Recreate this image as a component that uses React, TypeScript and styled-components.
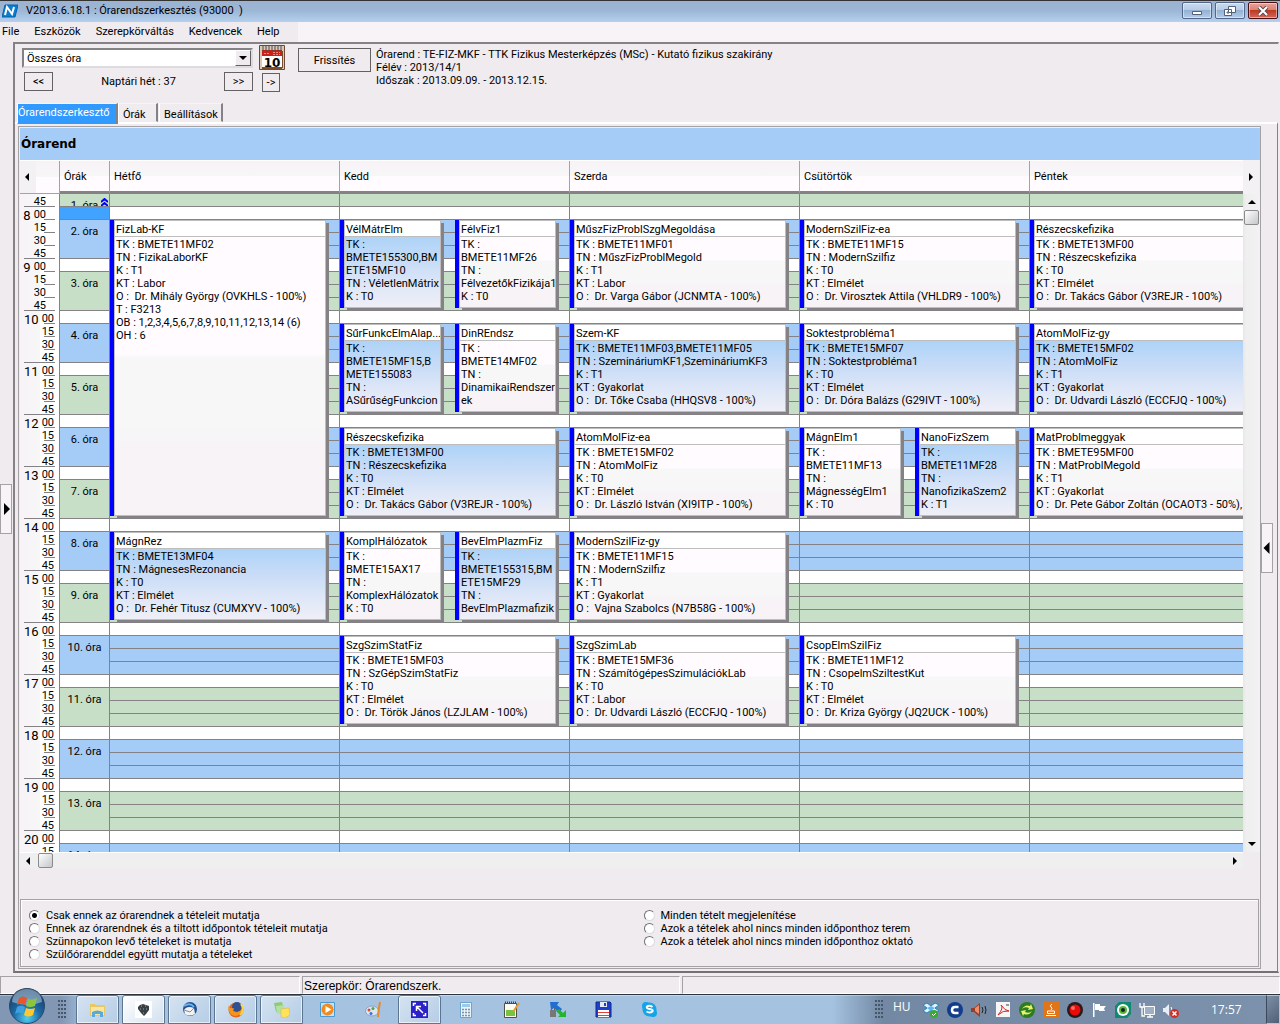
import React, { useState } from "react";
import styled, { createGlobalStyle, css } from "styled-components";

const face = "#efebef";
const pale = "#f7f3f7";
const line = "#848284";
const blue = "#a5cbf7";
const green = "#c6dfc6";

const GlobalStyle = createGlobalStyle`
  *, *::before, *::after { box-sizing: border-box; }
  body { margin: 0; background: ${face}; color: #000; font: 11px/13px Roboto, "Liberation Sans", Arial, sans-serif; }
  button, select, input { font: inherit; color: inherit; margin: 0; }
  button { padding: 0; border: 0; background: none; }
`;

const Window = styled.div`
  display: flex;
  flex-direction: column;
  height: 100vh;
  min-height: 600px;
  overflow: hidden;
`;

/* ---------- title bar and menu ---------- */

const TitleBar = styled.header`
  display: flex;
  align-items: center;
  gap: 3px;
  height: 22px;
  flex: none;
  padding: 0 2px 2px;
  border-top: 1px solid #333;
  background: linear-gradient(#9cb3d3, #9cb6d6 45%, #b5d0ef);
`;

const Title = styled.h1`
  flex: 1;
  margin: 0 0 0 5px;
  font-size: 11px;
  font-weight: 400;
  line-height: 16px;
  white-space: pre;
`;

const WindowButton = styled.button<{ $close?: boolean }>`
  display: grid;
  place-items: center;
  width: 30px;
  height: 17px;
  border: 1px solid ${(p) => (p.$close ? "#4a1018" : "#52658a")};
  border-radius: 2px;
  background: ${(p) =>
    p.$close
      ? "linear-gradient(#e8a297, #d98072 48%, #bd3a22 50%, #d0695a)"
      : "linear-gradient(#c9dbf0, #b5cbe6 48%, #94b1d3 50%, #b1cdea)"};
  box-shadow: inset 0 0 0 1px rgba(255, 255, 255, 0.45);
`;

const MenuBar = styled.nav`
  display: flex;
  height: 20px;
  flex: none;
  background: ${pale};
`;

const MenuItems = styled.div`
  display: flex;
  gap: 15px;
  width: 298px;
  padding-left: 2px;
  background: ${face};
`;

const MenuItem = styled.button`
  line-height: 16px;
`;

/* ---------- frame ---------- */

const Main = styled.main`
  display: flex;
  flex: 1;
  min-height: 0;
`;

const Strip = styled.div<{ $wide?: boolean }>`
  display: flex;
  align-items: center;
  flex: none;
  width: ${(p) => (p.$wide ? 16 : 13)}px;
`;

const Handle = styled.button`
  display: grid;
  place-items: center;
  width: 12px;
  height: 50px;
  border: 1px solid #a5a2a5;
  background: ${pale};
`;

const Frame = styled.section`
  display: flex;
  flex-direction: column;
  flex: 1;
  min-width: 0;
  margin: 0 1px 3px 0;
  border: 2px solid;
  border-color: ${line} ${face} #737173 ${line};
  border-right-width: 1px;
`;

/* ---------- toolbar ---------- */

const Toolbar = styled.div`
  display: flex;
  align-items: flex-start;
  height: 59px;
  flex: none;
  padding: 1px 7px 0;
`;

const WeekPicker = styled.div`
  display: flex;
  flex-direction: column;
  gap: 4px;
  width: 231px;
  padding-top: 3px;
`;

const SelectBox = styled.div`
  position: relative;
  height: 20px;
`;

const Select = styled.select`
  appearance: none;
  width: 100%;
  height: 20px;
  padding: 0 20px 0 3px;
  border: 2px solid;
  border-color: ${line} #dedbde #dedbde ${line};
  border-radius: 0;
  background: #fff;
`;

const SelectArrow = styled.span`
  position: absolute;
  top: 2px;
  right: 2px;
  display: grid;
  place-items: center;
  width: 16px;
  height: 16px;
  border: 1px solid;
  border-color: #fff #636163 #636163 #fff;
  background: ${face};
  pointer-events: none;
`;

const WeekRow = styled.div`
  display: flex;
  align-items: center;
  justify-content: space-between;
  padding: 0 0 0 2px;
`;

const FlatButton = styled.button<{ $w: number; $h: number }>`
  flex: none;
  width: ${(p) => p.$w}px;
  height: ${(p) => p.$h}px;
  border: 1px solid #636163;
  background: ${face};
`;

const IconColumn = styled.div`
  display: flex;
  flex-direction: column;
  align-items: flex-start;
  gap: 3px;
  margin: 0 13px 0 6px;
`;

const CalendarButton = styled.button`
  display: block;
  width: 26px;
  height: 25px;
`;

const NextButton = styled(FlatButton)`
  margin-left: 3px;
`;

const RefreshButton = styled(FlatButton)`
  margin-top: 3px;
`;

const Info = styled.p`
  margin: 3px 0 0 5px;
  white-space: pre-line;
`;

/* ---------- tabs ---------- */

const Tabs = styled.div`
  display: flex;
  height: 19px;
  flex: none;
  padding-left: 2px;
`;

const Tab = styled.button<{ $active: boolean; $w: number }>`
  width: ${(p) => p.$w}px;
  margin-right: 1px;
  padding: 3px 0 0 4px;
  text-align: left;
  white-space: nowrap;
  border: 1px solid;
  border-color: ${pale} ${line} transparent #fff;
  border-right-width: 2px;
  ${(p) =>
    p.$active &&
    css`
      height: 21px;
      padding: 0 0 3px;
      margin-right: 0;
      color: #fff;
      background: #319aff;
      z-index: 1;
    `}
`;

const Page = styled.div`
  display: flex;
  flex: 1;
  min-height: 0;
  border-top: 2px solid #fff;
  border-right: 1px solid ${line};
`;

const PageBody = styled.div`
  display: flex;
  flex-direction: column;
  flex: 1;
  min-width: 0;
  margin: 2px 0 2px 3px;
  padding: 1px 0 0 1px;
  border: 1px solid #a5a2a5;
`;

const Band = styled.h2`
  flex: none;
  height: 32px;
  margin: 0;
  font: bold 12px/32px "DejaVu Sans", "Liberation Sans", sans-serif;
  padding-left: 1px;
  background: ${blue};
`;

/* ---------- timetable ---------- */

const Timetable = styled.div`
  display: grid;
  grid-template-columns: minmax(0, 1fr) 17px;
  grid-template-rows: 34px minmax(0, 1fr) 16px;
  flex: 1;
  min-height: 0;
`;

const columns = css`
  display: grid;
  grid-template-columns: 40px 50px repeat(10, 115px);
  overflow: hidden;
`;

const HeadRow = styled.div`
  ${columns}
  border-top: 1px solid #fff;
`;

const HeadCell = styled.div<{ $span?: number }>`
  grid-column: span ${(p) => p.$span ?? 1};
  padding: 9px 4px 8px;
  border-right: 1px solid #a5a2a5;
  border-bottom: 3px solid ${line};
  background: linear-gradient(${pale}, #f7f7f7 50%, #fffbff 50%);
`;

const HeadCorner = styled(HeadCell)`
  display: flex;
  padding: 0;
  border-bottom: 1px solid #a5a2a5;
`;

const SideButton = styled.button`
  display: grid;
  place-items: center;
  width: 16px;
  background: #f3f1f3;
`;

const Body = styled.div`
  ${columns}
  grid-auto-rows: 13px;
  background: #fff;
`;

const TimeCell = styled.div<{ $row: number; $last: boolean; $narrow: boolean }>`
  grid-area: ${(p) => p.$row + 1} / 1;
  display: flex;
  justify-content: flex-end;
  padding-right: ${(p) => (p.$narrow ? 13 : 5)}px;
  border-right: 1px solid ${line};
  line-height: 15px;
  background:
    linear-gradient(${line}, ${line}) no-repeat ${(p) => (p.$last ? 4 : 24)}px 12px / ${(p) => (p.$last ? 31 : 11)}px 1px,
    linear-gradient(90deg, ${pale}, #f7f7f7 20px, transparent 20px);
`;

const Hour = styled.span`
  font-size: 13px;
  line-height: 17px;
  margin-right: 3px;
`;

const Lesson = styled.div<{ $row: number; $rows: number; $bg: string }>`
  grid-area: ${(p) => p.$row + 1} / 2 / span ${(p) => p.$rows};
  display: flex;
  justify-content: center;
  overflow: hidden;
  padding-top: 5px;
  border: solid ${line};
  border-width: 0 1px 1px 0;
  background: ${(p) => p.$bg};
`;

const Slot = styled.div<{ $row: number; $day: number; $bg: string }>`
  grid-area: ${(p) => p.$row + 1} / ${(p) => p.$day * 2 + 3} / auto / span 2;
  border: solid ${line};
  border-width: 0 1px 1px 0;
  background: ${(p) => p.$bg};
`;

const Card = styled.article<{ $row: number; $rows: number; $col: number; $cols: number }>`
  grid-area: ${(p) => p.$row + 1} / ${(p) => p.$col + 3} / span ${(p) => p.$rows} / span ${(p) => p.$cols};
  min-width: 0;
  margin: 0 14px 3px 0;
  border-left: 4px solid #0000ff;
  display: flex;
`;

const CardFace = styled.div<{ $tinted: boolean }>`
  display: flex;
  flex-direction: column;
  flex: 1;
  min-width: 0;
  overflow: hidden;
  border: 1px solid #bdbebd;
  background: ${(p) =>
    p.$tinted
      ? "linear-gradient(#add3f7 16px, #c6dbf7 45%, #dee7f7 75%, #efeff7)"
      : "linear-gradient(#fffbff 45%, #f7f7f7 47%, #f7f7f7 70%, #f7f3f7 78%)"};
  box-shadow: 3px 3px 0 ${line};
`;

const CardTitle = styled.h3`
  flex: none;
  height: 16px;
  margin: 0;
  padding: 2px 1px 0;
  overflow: hidden;
  font: inherit;
  white-space: nowrap;
  border-bottom: 1px solid #bdbebd;
  background: #fff;
`;

const CardText = styled.p`
  margin: 0;
  padding: 1px 1px 0;
  white-space: pre;
`;

const ScrollY = styled.div`
  display: flex;
  flex-direction: column;
  background: linear-gradient(90deg, #e7e7e7, #efefef 3px, #f3f1f3);
`;

const ScrollX = styled.div`
  display: flex;
  border-top: 1px solid #fff;
  background: #efefef;
`;

const ScrollArrow = styled.button<{ $end?: boolean }>`
  display: grid;
  place-items: center;
  width: 17px;
  height: 16px;
  ${(p) => p.$end && "margin: auto 0 0 auto;"}
`;

const Thumb = styled.div`
  flex: none;
  width: 15px;
  height: 15px;
  margin-left: 1px;
  border: 1px solid #8c8a8c;
  border-radius: 2px;
  background: linear-gradient(135deg, #fff, #dedfe0 55%, #c6c7c8);
`;

/* ---------- filter options ---------- */

const Options = styled.fieldset`
  display: grid;
  grid-template-columns: 1fr 1fr;
  flex: none;
  height: 68px;
  margin: 31px 1px 1px 0;
  padding: 9px 0 0 8px;
  border: 1px solid #a5a2a5;
  box-shadow: inset 1px 1px 0 #fff;
`;

const Option = styled.label`
  display: flex;
  align-items: center;
  gap: 6px;
  height: 13px;
`;

const Radio = styled.input`
  appearance: none;
  width: 11px;
  height: 11px;
  border: 1px solid;
  border-color: #737173 #dedbde #dedbde #737173;
  border-radius: 50%;
  background: #fff;
  &:checked {
    background: radial-gradient(circle, #000 2px, #fff 3px);
  }
`;

const StatusBar = styled.footer`
  display: grid;
  grid-template-columns: 300px 378px 1fr;
  gap: 2px;
  height: 18px;
  flex: none;
`;

const StatusPane = styled.div`
  padding: 3px 1px 0;
  font-family: "Liberation Sans", Arial, sans-serif;
  font-size: 12px;
  border: 1px solid;
  border-color: #a5a2a5 #fff #fff #a5a2a5;
`;

/* ---------- taskbar ---------- */

const Taskbar = styled.div`
  display: flex;
  height: 30px;
  flex: none;
  border-top: 1px solid #29343f;
  background: linear-gradient(90deg, #8197b3, #8197b3 60px, #a5c3e1 90px, #a5c3e1 65%, #7288a3 69%, #7b91ac);
  box-shadow: inset 0 1px 0 rgba(255, 255, 255, 0.35);
`;

const Start = styled.button`
  position: relative;
  width: 58px;
  & > svg {
    position: absolute;
    top: -7px;
    left: 8px;
  }
`;

const Grip = styled.span`
  width: 9px;
  margin: 5px 9px 4px 0;
  background: radial-gradient(circle at 1px 1px, #46566b 1px, transparent 1px) 0 0 / 3px 4px;
`;

const Tasks = styled.div`
  display: flex;
  flex: 1;
  gap: 3px;
`;

const Task = styled.button<{ $open?: boolean; $light?: boolean }>`
  display: grid;
  place-items: center;
  flex: none;
  width: 43px;
  border-radius: 3px 3px 0 0;
  ${(p) =>
    p.$open &&
    css`
      border: 1px solid #5c7591;
      box-shadow: inset 0 0 0 1px rgba(255, 255, 255, 0.6);
      background: linear-gradient(135deg, #d5e3f1, #b5cde6);
    `}
  ${(p) => p.$light && "background: linear-gradient(135deg, #fff, #d2e0ef);"}
`;

const Tray = styled.div`
  display: flex;
  align-items: center;
  gap: 8px;
  color: #fff;
`;

const Language = styled.span`
  width: 22px;
  padding-bottom: 6px;
  font: 12px/14px "Open Sans", sans-serif;
`;

const Clock = styled.time`
  width: 47px;
  margin-left: 24px;
  font: 12px/14px "Open Sans", sans-serif;
`;

const ShowDesktop = styled.button`
  width: 14px;
  height: 100%;
  border: 1px solid #b5c3d3;
  border-left-color: #3c4a5c;
  background: linear-gradient(135deg, #7d8fa5, #4f6077);
`;

/* ---------- drawings ---------- */

const arrowPaths = {
  left: "M5 0v8L1 4z",
  right: "M2 0v8l4-4z",
  up: "M0 6h8L4 2z",
  down: "M0 2h8L4 6z",
};

const Arrow = ({ dir, size = 8 }: { dir: keyof typeof arrowPaths; size?: number }) => (
  <svg width={size} height={size} viewBox="0 0 8 8" aria-hidden="true">
    <path d={arrowPaths[dir]} fill="#000" />
  </svg>
);

const AppLogo = () => (
  <svg width="16" height="14" viewBox="0 0 16 14" aria-hidden="true">
    <path d="M3 1h13l-3 12H0z" fill="#0b7ed0" stroke="#0562ab" strokeWidth="1" />
    <path d="M3 11L5 3l5 7 2-7" fill="none" stroke="#fff" strokeWidth="2" />
  </svg>
);

const CalendarIcon = () => (
  <svg width="26" height="25" viewBox="0 0 26 25" aria-hidden="true">
    <path d="M.5.5h25v24H.5z" fill="#d9c9b8" stroke="#6b4a38" />
    <path d="M3 5h20v6H3z" fill="#c92218" />
    <path d="M3 11h20v11H3z" fill="#fff" />
    <path d="M3 22h20v2H3zM23 6h1v17h-1z" fill="#7b4c2c" />
    <path d="M4 1v5M7 1v5M10 1v5M13 1v5M16 1v5M19 1v5M22 1v5" stroke="#4c4c4c" />
    <path d="M5 8.500h6M14 7.500h7M14 9.500h7" stroke="#ef8a80" strokeDasharray="2 1" />
    <text x="13" y="21.500" textAnchor="middle" fontFamily="DejaVu Sans" fontSize="12" fontWeight="bold">10</text>
  </svg>
);

const StartOrb = () => (
  <svg width="38" height="36" viewBox="0 0 38 36" aria-hidden="true">
    <defs>
      <radialGradient id="orb" cx="50%" cy="85%" r="85%">
        <stop offset="0" stopColor="#4fd0f2" />
        <stop offset=".45" stopColor="#1d6aa6" />
        <stop offset="1" stopColor="#16365a" />
      </radialGradient>
    </defs>
    <circle cx="19" cy="18" r="17.500" fill="url(#orb)" stroke="#29486a" />
    <path d="M4 14a15 13 0 0 1 30 0q-15 6-30 0z" fill="#c8dceb" opacity=".5" />
    <path d="M11 10q4-3 8 0l-2 7q-4-3-8 0z" fill="#e8562a" />
    <path d="M20 11q4 2 9-1l-2 8q-5 2-9 0z" fill="#8cc63f" />
    <path d="M9 19q4-3 8 0l-2 7q-4-3-8 0z" fill="#3fa0e0" />
    <path d="M18 20q4 2 9 0l-2 7q-5 3-9 0z" fill="#ffc82e" />
  </svg>
);

const taskIcons: { name: string; open?: boolean; light?: boolean; art: React.ReactNode }[] = [
  {
    name: "Intéző", open: true,
    art: <><path d="M1 3h5l1 1h9v11H1z" fill="#e9c765" /><path d="M2 6h13v8H2z" fill="#f9e7a0" /><path d="M3 16v-5q5-3 11 0v5h-3v-3H6v3z" fill="#5aa9dd" /></>,
  },
  {
    name: "Neptun", open: true, light: true,
    art: <><path d="M0 0h17v17H0z" fill="#fff" /><path d="M5 4l3-1 3 1 3 1v4l-3 4-2 2-3-3-3-4V6z" fill="#394045" /><path d="M6 5h1M10 5h1M8 8h1M5 8h1M11 8h1M8 12h1" stroke="#9aa" /></>,
  },
  {
    name: "Thunderbird", open: true,
    art: <><circle cx="9" cy="8" r="7" fill="#234f94" /><path d="M3 9q3-5 10-2l1 6q-6 3-10 0z" fill="#f2f2f2" /><path d="M3 9l6 2 4-4" stroke="#889" fill="none" /><path d="M3 5q6-4 10 1" stroke="#68b2ea" strokeWidth="2" fill="none" /></>,
  },
  {
    name: "Firefox", open: true,
    art: <><circle cx="9" cy="9" r="7.500" fill="#e2661b" /><circle cx="10" cy="6" r="5" fill="#31508f" /><path d="M1 4q1 4 6 3l-1 3q5 3 9-2-1 7-7 7-7-1-7-11z" fill="#f4951e" /><path d="M14 3q4 6-1 11" stroke="#ffd24a" strokeWidth="2" fill="none" /></>,
  },
  {
    name: "Cetlik", open: true,
    art: <><path d="M1 2l8-1 2 8-8 2z" fill="#8bcb72" /><path d="M3 5l8-1 1 8-8 1z" fill="#b6dfa0" /><path d="M8 8l8-1 1 7-5 3-4-1z" fill="#ffe25a" stroke="#d8b42e" strokeWidth=".5" /></>,
  },
  {
    name: "Médialejátszó",
    art: <><path d="M1.500 1.500h14v14h-14z" fill="#c5e2f6" stroke="#4b9ad4" /><circle cx="8.500" cy="8.500" r="6" fill="#f28a1c" /><path d="M6.500 5v7l6-3.500z" fill="#fff" /></>,
  },
  {
    name: "Rajzoló",
    art: <><ellipse cx="7" cy="10" rx="6.500" ry="5" fill="#dbe7ef" stroke="#8aa5b9" /><circle cx="4" cy="9" r="1.500" fill="#d94c3a" /><circle cx="8" cy="7.500" r="1.500" fill="#4ca64c" /><circle cx="6" cy="12.500" r="1.500" fill="#3a6fd9" /><path d="M15 1l-1 6-1 9" stroke="#e58a2f" strokeWidth="2" fill="none" /></>,
  },
  {
    name: "Távoli asztal", open: true,
    art: <><path d="M0 0h17v17H0z" fill="#2d22c8" /><path d="M2.500 5V2.500H5M12 2.500h2.500V5M14.500 12v2.500H12M5 14.500H2.500V12M5.500 10V5.500H10M6 6l6 6" stroke="#fff" strokeWidth="1.500" fill="none" /></>,
  },
  {
    name: "Számológép",
    art: <><path d="M3.500 1.500h11v15h-11z" fill="#eaf3fa" stroke="#6ea3cd" /><path d="M5 3h8v3H5z" fill="#9ccbea" /><path d="M5 8.500h8M5 11.500h8M5 14.500h8" stroke="#7893ab" strokeWidth="1.500" strokeDasharray="2 1" /></>,
  },
  {
    name: "Jegyzettömb",
    art: <><path d="M1.500 2.500h12v14h-12z" fill="#fbfbf4" stroke="#4d5340" /><path d="M3 9h9v6H3z" fill="#79c143" /><path d="M2 1.500h11" stroke="#444" strokeWidth="2" strokeDasharray="1 1" /><path d="M16 2l-6 9" stroke="#e8982c" strokeWidth="2" /></>,
  },
  {
    name: "WinSCP",
    art: <><path d="M1 1h9L8 4l5 4-3 4-5-5-3 2z" fill="#1f6fd0" /><path d="M17 16h-8l2-2-4-4 3-2 4 4 3-3z" fill="#25b52d" /><path d="M1 9h6v7H1z" fill="#777" /><path d="M2.500 9V7q1.500-2 3 0v2" stroke="#666" fill="none" /></>,
  },
  {
    name: "Mentés",
    art: <><path d="M1 1h14l1 1v14H1z" fill="#1d3fd0" stroke="#12268a" /><path d="M5 1h7v5H5z" fill="#e4e9f2" /><path d="M9 2h2v3H9z" fill="#1d3fd0" /><path d="M3 9h11v7H3z" fill="#fff" /><path d="M3 11.500h11M3 14.500h11" stroke="#df4040" /></>,
  },
  {
    name: "Skype",
    art: <><circle cx="8.500" cy="8.500" r="7" fill="#12a5e8" /><circle cx="5" cy="5" r="4" fill="#12a5e8" /><circle cx="12" cy="12" r="4" fill="#12a5e8" /><path d="M11.500 6q-3-2-5.500-.500-1 2 2.500 2.500 4 .5 3 2.500-2.500 2-6 0" stroke="#fff" strokeWidth="2" fill="none" /></>,
  },
];

const trayIcons: { name: string; art: React.ReactNode }[] = [
  { name: "Dropbox", art: <><path d="M0 3l4-2 4 3 4-3 4 2-4 3 4 3-4 2-4-3-4 3-4-2 4-3z" fill="#e2f3ff" stroke="#2484c6" /><path d="M4 6l4-2 4 2-4 3z" fill="#5db8ee" /><circle cx="11" cy="12" r="4" fill="#3aa935" /><path d="M9 12l1.500 1.500L13 11" stroke="#fff" fill="none" /></> },
  { name: "COMODO", art: <><circle cx="8" cy="8" r="8" fill="#123c8c" /><path d="M11.500 5H8Q5 5 5 8t3 3h3.500" stroke="#fff" strokeWidth="2.500" fill="none" /></> },
  { name: "Hang", art: <><path d="M0 6h3l6-5v14l-6-5H0z" fill="#9c3b22" /><path d="M4 6l4-3v9L4 9z" fill="#ef8d68" /><path d="M11 5q2 3 0 6M14 4q2 4 0 8" stroke="#222" fill="none" /></> },
  { name: "PDF", art: <><path d="M1 0h14v15H1z" fill="#f6f6f6" /><path d="M3 13Q9 6 6 3q4 6 8 6-6-1-11 4" stroke="#d62222" fill="none" /><path d="M11 2h3v2h-3z" fill="#999" /></> },
  { name: "Szinkron", art: <><circle cx="8" cy="8" r="8" fill="#2b7d22" /><path d="M3 7q3-5 8-3l1-2 2 5-5 1 1-2Q6 4 3 7zM13 9q-3 5-8 3l-1 2-2-5 5-1-1 2q4 2 7-1z" fill="#e8f26d" /></> },
  { name: "Java", art: <><path d="M0 0h16v16H0z" fill="#e27418" /><path d="M9 2Q6 4 8 5t0 3M4.500 9h7v2.500h-7zM3 13.500h10" stroke="#fff" fill="none" /></> },
  { name: "Felvétel", art: <><circle cx="8" cy="8" r="8" fill="#2a1a1a" /><circle cx="8" cy="8" r="5.500" fill="#e80c0c" /><circle cx="6" cy="6" r="2" fill="#ff6b5b" /></> },
  { name: "Műveletközpont", art: <path d="M2 1h1.500v14H2zM4 2h5v2h6l-2 2.500 1 2.500H8V8H4z" fill="#fff" /> },
  { name: "Védelem", art: <><path d="M4 0h12v12l-4 4H0V4z" fill="#0f8a70" /><circle cx="8" cy="8" r="6" fill="#fff" /><circle cx="8" cy="8" r="4" fill="#5cb531" /><circle cx="8" cy="8" r="2" fill="#123" /></> },
  { name: "Hálózat", art: <><path d="M5.500 4.500h10v8h-10z" fill="#9fb0c4" stroke="#fff" /><path d="M8 15h6M11 13v2M1 1v4h4V1M3 5v9h3" stroke="#fff" strokeWidth="1.300" fill="none" /></> },
  { name: "Némítva", art: <><path d="M0 6h2l4-4v12l-4-4H0z" fill="#e8eef5" /><path d="M8 5q2 3 0 6" stroke="#fff" fill="none" /><circle cx="11.500" cy="11.500" r="4.500" fill="#d62b22" /><path d="M9.500 9.500l4 4m0-4l-4 4" stroke="#fff" strokeWidth="1.500" /></> },
];

/* ---------- data ---------- */

const days = ["Hétfő", "Kedd", "Szerda", "Csütörtök", "Péntek"];
const rowCount = 51;

type Course = { title: string; row: number; rows?: number; col: number; half?: boolean; tinted?: boolean; text: string };

const courses: Course[] = [
  { title: "FizLab-KF", row: 2, rows: 23, col: 0, text: "TK : BMETE11MF02\nTN : FizikaLaborKF\nK : T1\nKT : Labor\nO :  Dr. Mihály György (OVKHLS - 100%)\nT : F3213\nOB : 1,2,3,4,5,6,7,8,9,10,11,12,13,14 (6)\nOH : 6" },
  { title: "MágnRez", row: 26, col: 0, tinted: true, text: "TK : BMETE13MF04\nTN : MágnesesRezonancia\nK : T0\nKT : Elmélet\nO :  Dr. Fehér Titusz (CUMXYV - 100%)" },
  { title: "VélMátrElm", row: 2, col: 2, half: true, tinted: true, text: "TK :\nBMETE155300,BM\nETE15MF10\nTN : VéletlenMátrix\nK : T0" },
  { title: "FélvFiz1", row: 2, col: 3, half: true, text: "TK :\nBMETE11MF26\nTN :\nFélvezetőkFizikája1\nK : T0" },
  { title: "SűrFunkcElmAlap...", row: 10, col: 2, half: true, tinted: true, text: "TK :\nBMETE15MF15,B\nMETE155083\nTN :\nASűrűségFunkcion" },
  { title: "DinREndsz", row: 10, col: 3, half: true, text: "TK :\nBMETE14MF02\nTN :\nDinamikaiRendszer\nek" },
  { title: "Részecskefizika", row: 18, col: 2, tinted: true, text: "TK : BMETE13MF00\nTN : Részecskefizika\nK : T0\nKT : Elmélet\nO :  Dr. Takács Gábor (V3REJR - 100%)" },
  { title: "KomplHálózatok", row: 26, col: 2, half: true, text: "TK :\nBMETE15AX17\nTN :\nKomplexHálózatok\nK : T0" },
  { title: "BevElmPlazmFiz", row: 26, col: 3, half: true, tinted: true, text: "TK :\nBMETE155315,BM\nETE15MF29\nTN :\nBevElmPlazmafizik" },
  { title: "SzgSzimStatFiz", row: 34, col: 2, text: "TK : BMETE15MF03\nTN : SzGépSzimStatFiz\nK : T0\nKT : Elmélet\nO :  Dr. Török János (LZJLAM - 100%)" },
  { title: "MűszFizProblSzgMegoldása", row: 2, col: 4, text: "TK : BMETE11MF01\nTN : MűszFizProblMegold\nK : T1\nKT : Labor\nO :  Dr. Varga Gábor (JCNMTA - 100%)" },
  { title: "Szem-KF", row: 10, col: 4, tinted: true, text: "TK : BMETE11MF03,BMETE11MF05\nTN : SzemináriumKF1,SzemináriumKF3\nK : T1\nKT : Gyakorlat\nO :  Dr. Tőke Csaba (HHQSV8 - 100%)" },
  { title: "AtomMolFiz-ea", row: 18, col: 4, text: "TK : BMETE15MF02\nTN : AtomMolFiz\nK : T0\nKT : Elmélet\nO :  Dr. László István (XI9ITP - 100%)" },
  { title: "ModernSzilFiz-gy", row: 26, col: 4, text: "TK : BMETE11MF15\nTN : ModernSzilfiz\nK : T1\nKT : Gyakorlat\nO :  Vajna Szabolcs (N7B58G - 100%)" },
  { title: "SzgSzimLab", row: 34, col: 4, text: "TK : BMETE15MF36\nTN : SzámítógépesSzimulációkLab\nK : T0\nKT : Labor\nO :  Dr. Udvardi László (ECCFJQ - 100%)" },
  { title: "ModernSzilFiz-ea", row: 2, col: 6, text: "TK : BMETE11MF15\nTN : ModernSzilfiz\nK : T0\nKT : Elmélet\nO :  Dr. Virosztek Attila (VHLDR9 - 100%)" },
  { title: "Soktestprobléma1", row: 10, col: 6, tinted: true, text: "TK : BMETE15MF07\nTN : Soktestprobléma1\nK : T0\nKT : Elmélet\nO :  Dr. Dóra Balázs (G29IVT - 100%)" },
  { title: "MágnElm1", row: 18, col: 6, half: true, text: "TK :\nBMETE11MF13\nTN :\nMágnességElm1\nK : T0" },
  { title: "NanoFizSzem", row: 18, col: 7, half: true, tinted: true, text: "TK :\nBMETE11MF28\nTN :\nNanofizikaSzem2\nK : T1" },
  { title: "CsopElmSzilFiz", row: 34, col: 6, text: "TK : BMETE11MF12\nTN : CsopelmSziltestKut\nK : T0\nKT : Elmélet\nO :  Dr. Kriza György (JQ2UCK - 100%)" },
  { title: "Részecskefizika", row: 2, col: 8, text: "TK : BMETE13MF00\nTN : Részecskefizika\nK : T0\nKT : Elmélet\nO :  Dr. Takács Gábor (V3REJR - 100%)" },
  { title: "AtomMolFiz-gy", row: 10, col: 8, tinted: true, text: "TK : BMETE15MF02\nTN : AtomMolFiz\nK : T1\nKT : Gyakorlat\nO :  Dr. Udvardi László (ECCFJQ - 100%)" },
  { title: "MatProblmeggyak", row: 18, col: 8, text: "TK : BMETE95MF00\nTN : MatProblMegold\nK : T1\nKT : Gyakorlat\nO :  Dr. Pete Gábor Zoltán (OCAOT3 - 50%)," },
];

const options: string[] = [
  "Csak ennek az órarendnek a tételeit mutatja",
  "Minden tételt megjelenítése",
  "Ennek az órarendnek és a tiltott időpontok tételeit mutatja",
  "Azok a tételek ahol nincs minden időponthoz terem",
  "Szünnapokon levő tételeket is mutatja",
  "Azok a tételek ahol nincs minden időponthoz oktató",
  "Szülőórarenddel együtt mutatja a tételeket",
];

const tabs = [
  { label: "Órarendszerkesztő", width: 101 },
  { label: "Órák", width: 40 },
  { label: "Beállítások", width: 64 },
];

/* Every fourth quarter is a break; lessons alternate between blue and green. */
const slotColor = (row: number) => {
  if (row % 4 === 1) return "#fff";
  return Math.floor((row + 2) / 4) % 2 ? blue : green;
};

const Hours = () => (
  <>
    {Array.from({ length: rowCount }, (_, row) => {
      const minutes = 7 * 60 + 45 + row * 15;
      const hour = Math.floor(minutes / 60);
      const quarter = minutes % 60;
      return (
        <TimeCell key={row} $row={row} $last={quarter === 45} $narrow={hour < 10}>
          {quarter === 0 && <Hour>{hour}</Hour>}
          {quarter === 0 ? "00" : quarter}
        </TimeCell>
      );
    })}
  </>
);

const Lessons = () => (
  <>
    <Lesson $row={0} $rows={1} $bg={green}>
      1. óra
    </Lesson>
    <Lesson $row={1} $rows={1} $bg="#42a2ff" />
    {Array.from({ length: 13 }, (_, i) => (
      <React.Fragment key={i}>
        <Lesson $row={2 + i * 4} $rows={3} $bg={i % 2 ? green : blue}>
          {i + 2}. óra
        </Lesson>
        {i < 12 && <Lesson $row={5 + i * 4} $rows={1} $bg="#fff" />}
      </React.Fragment>
    ))}
  </>
);

const MoreAbove = styled.span`
  grid-area: 1 / 2;
  display: flex;
  align-items: flex-end;
  justify-content: flex-end;
  padding: 0 2px 1px;
`;

export default function App() {
  const [option, setOption] = useState(0);
  const [tab, setTab] = useState(0);

  return (
    <Window>
      <GlobalStyle />
      <TitleBar>
        <AppLogo />
        <Title>V2013.6.18.1 : Órarendszerkesztés (93000  )</Title>
        <WindowButton aria-label="Kis méret">
          <svg width="12" height="10"><path d="M1.500 5.500h9v3h-9z" fill="#fff" stroke="#52607b" /></svg>
        </WindowButton>
        <WindowButton aria-label="Előző méret">
          <svg width="12" height="12" fill="#fff" stroke="#52607b"><path d="M4.500 1.500h7v6h-7zM.500 4.500h7v6h-7z" /><path d="M3 7h2v1H3z" /></svg>
        </WindowButton>
        <WindowButton $close aria-label="Bezárás">
          <svg width="12" height="10"><path d="M2 1l8 8M10 1L2 9" stroke="#5b4a56" strokeWidth="4" /><path d="M2 1l8 8M10 1L2 9" stroke="#fff" strokeWidth="2" /></svg>
        </WindowButton>
      </TitleBar>
      <MenuBar>
        <MenuItems>
          {["File", "Eszközök", "Szerepkörváltás", "Kedvencek", "Help"].map((m) => (
            <MenuItem key={m}>{m}</MenuItem>
          ))}
        </MenuItems>
      </MenuBar>

      <Main>
        <Strip>
          <Handle aria-label="Bal panel"><Arrow dir="right" size={12} /></Handle>
        </Strip>
        <Frame>
          <Toolbar>
            <WeekPicker>
              <SelectBox>
                <Select aria-label="Órák szűrése"><option>Összes óra</option></Select>
                <SelectArrow><Arrow dir="down" /></SelectArrow>
              </SelectBox>
              <WeekRow>
                <FlatButton $w={29} $h={19}>&lt;&lt;</FlatButton>
                <span>Naptári hét : 37</span>
                <FlatButton $w={29} $h={19}>&gt;&gt;</FlatButton>
              </WeekRow>
            </WeekPicker>
            <IconColumn>
              <CalendarButton aria-label="Naptár"><CalendarIcon /></CalendarButton>
              <NextButton $w={18} $h={19}>-&gt;</NextButton>
            </IconColumn>
            <RefreshButton $w={73} $h={24}>Frissítés</RefreshButton>
            <Info>
              {"Órarend : TE-FIZ-MKF - TTK Fizikus Mesterképzés (MSc) - Kutató fizikus szakirány\nFélév : 2013/14/1\nIdőszak : 2013.09.09. - 2013.12.15."}
            </Info>
          </Toolbar>

          <Tabs role="tablist">
            {tabs.map((t, i) => (
              <Tab key={t.label} role="tab" aria-selected={tab === i} $active={tab === i} $w={t.width} onClick={() => setTab(i)}>
                {t.label}
              </Tab>
            ))}
          </Tabs>

          <Page>
            <PageBody>
              <Band>Órarend</Band>
              <Timetable>
                <HeadRow>
                  <HeadCorner>
                    <SideButton aria-label="Előző nap"><Arrow dir="left" /></SideButton>
                  </HeadCorner>
                  <HeadCell>Órák</HeadCell>
                  {days.map((d) => (
                    <HeadCell key={d} $span={2}>{d}</HeadCell>
                  ))}
                </HeadRow>
                <SideButton aria-label="Következő nap"><Arrow dir="right" /></SideButton>

                <Body>
                  <Hours />
                  <Lessons />
                  <MoreAbove>
                    <svg width="7" height="8" aria-hidden="true"><path d="M0 4l3.500-3L7 4M0 8l3.500-3L7 8" fill="none" stroke="#00f" strokeWidth="2" /></svg>
                  </MoreAbove>
                  {days.map((d, day) =>
                    Array.from({ length: rowCount }, (_, row) => (
                      <Slot key={d + row} $row={row} $day={day} $bg={slotColor(row)} />
                    )),
                  )}
                  {courses.map((c) => (
                    <Card key={c.col + "-" + c.row} $row={c.row} $rows={c.rows ?? 7} $col={c.col} $cols={c.half ? 1 : 2}>
                      <CardFace $tinted={!!c.tinted}>
                        <CardTitle>{c.title}</CardTitle>
                        <CardText>{c.text}</CardText>
                      </CardFace>
                    </Card>
                  ))}
                </Body>
                <ScrollY>
                  <ScrollArrow aria-label="Fel"><Arrow dir="up" /></ScrollArrow>
                  <Thumb />
                  <ScrollArrow $end aria-label="Le"><Arrow dir="down" /></ScrollArrow>
                </ScrollY>
                <ScrollX>
                  <ScrollArrow aria-label="Balra"><Arrow dir="left" /></ScrollArrow>
                  <Thumb />
                  <ScrollArrow $end aria-label="Jobbra"><Arrow dir="right" /></ScrollArrow>
                </ScrollX>
              </Timetable>

              <Options>
                {options.map((o, i) => (
                  <Option key={o}>
                    <Radio type="radio" name="items" checked={option === i} onChange={() => setOption(i)} />
                    {o}
                  </Option>
                ))}
              </Options>
            </PageBody>
            <Strip $wide>
              <Handle aria-label="Jobb panel"><Arrow dir="left" size={12} /></Handle>
            </Strip>
          </Page>
        </Frame>
      </Main>

      <StatusBar>
        <StatusPane />
        <StatusPane>Szerepkör: Órarendszerk.</StatusPane>
        <StatusPane />
      </StatusBar>

      <Taskbar>
        <Start aria-label="Start"><StartOrb /></Start>
        <Grip />
        <Tasks>
          {taskIcons.map((t) => (
            <Task key={t.name} aria-label={t.name} $open={t.open} $light={t.light}>
              <svg width="17" height="17" viewBox="0 0 17 17">{t.art}</svg>
            </Task>
          ))}
        </Tasks>
        <Grip />
        <Tray>
          <Language>HU</Language>
          {trayIcons.map((t) => (
            <svg key={t.name} width="16" height="16" viewBox="0 0 16 16" role="img" aria-label={t.name}>{t.art}</svg>
          ))}
          <Clock>17:57</Clock>
          <ShowDesktop aria-label="Asztal megjelenítése" />
        </Tray>
      </Taskbar>
    </Window>
  );
}
